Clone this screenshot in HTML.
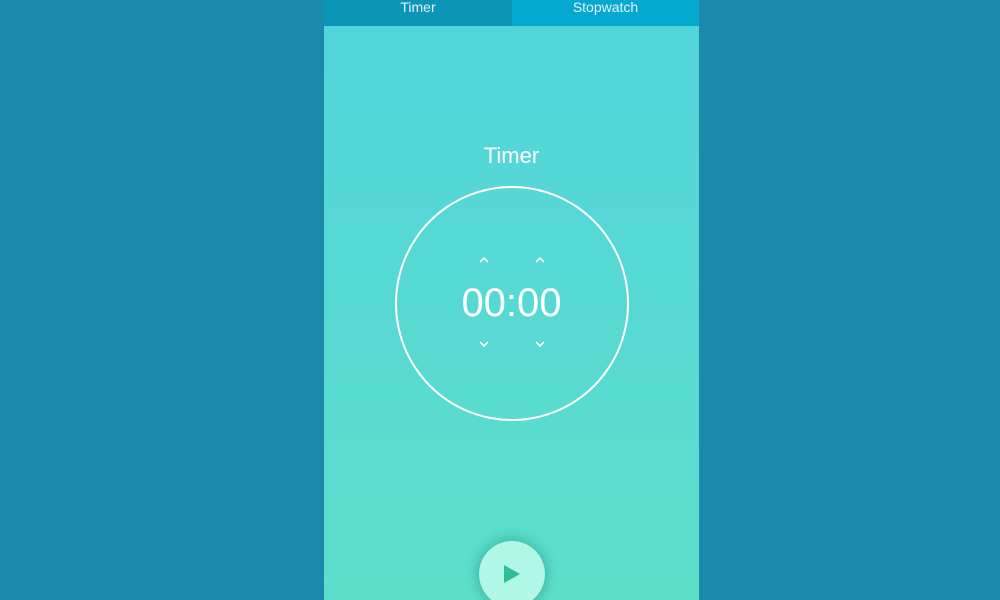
<!DOCTYPE html>
<html><head><style>
body{margin:0;width:1000px;height:600px;background:#1a89ab;overflow:hidden;font-family:"Liberation Sans",sans-serif;position:relative}
.p{position:absolute;left:324px;top:0;width:375px;height:600px;background:linear-gradient(#52d3dc,#5cdfca);overflow:hidden}
.t{position:absolute;top:0;height:26px;line-height:15px;color:#eef;font-size:14px;text-align:center}
.c{position:absolute;left:71px;top:186px;width:234px;height:235px;border:2.5px solid #fff;border-radius:50%;box-sizing:border-box}
</style></head><body>
<div class="p">
<div class="t" style="left:0;width:188px;background:#0b96b8">Timer</div>
<div class="t" style="left:188px;width:187px;background:#03a9cf">Stopwatch</div>
<div style="position:absolute;left:0;width:375px;top:143px;text-align:center;color:#fff;font-size:22px">Timer</div>
<div class="c"></div>
<div style="position:absolute;left:0;width:375px;top:281px;text-align:center;color:#fff;font-size:40px;line-height:44px">00:00</div>
<svg style="position:absolute;left:0;top:0" width="375" height="600" fill="none" stroke="#fff" stroke-width="1.6">
<path d="M156 262l4-4 4 4M212 262l4-4 4 4M156 342l4 4 4-4M212 342l4 4 4-4"/>
</svg>
<div style="position:absolute;left:155px;top:541px;width:66px;height:66px;border-radius:50%;background:#b0f7e6;box-shadow:0 0 14px rgba(0,90,90,.45)"></div>
<svg style="position:absolute;left:178px;top:563px" width="22" height="22"><path d="M2 2L18 11L2 20Z" fill="#2bbf94"/></svg>
</div>
</body></html>
